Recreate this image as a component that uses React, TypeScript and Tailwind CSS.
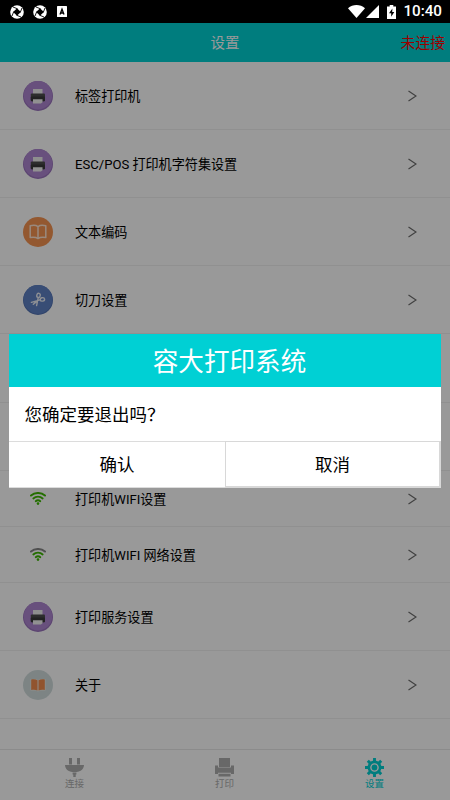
import { ReactNode } from "react";

function PrinterBadge() {
  return (
    <svg viewBox="0 0 30 30" className="h-[30px] w-[30px]">
      <circle cx="15" cy="15" r="15" fill="#9a73bd" />
      <circle cx="15" cy="14.2" r="14.2" fill="#ae86d1" />
      <rect x="10" y="8" width="9.5" height="6" fill="#ededed" />
      <rect x="7.8" y="12.4" width="14.2" height="7.8" rx="1" fill="#4b4b4b" />
      <rect x="7.8" y="15.6" width="14.2" height="4.6" rx="1" fill="#3a3a3a" />
      <path d="M10 18.2h9.5v3l-1.6 1.3H10z" fill="#f2f2f2" />
    </svg>
  );
}

function BookBadge() {
  return (
    <svg viewBox="0 0 30 30" className="h-[30px] w-[30px]">
      <circle cx="15" cy="15" r="15" fill="#f69350" />
      <path
        d="M15 9.6C13 8.1 10 8.1 7.2 8.8v11.8c2.8-.5 5.8-.4 7.8 1 2-1.4 5-1.5 7.8-1V8.8C20 8.1 17 8.1 15 9.6zM15 9.6v12"
        fill="none"
        stroke="#ffe5d2"
        strokeWidth="1.5"
        strokeLinejoin="round"
      />
    </svg>
  );
}

function ScissorsBadge() {
  return (
    <svg viewBox="0 0 30 30" className="h-[30px] w-[30px]">
      <circle cx="15" cy="15" r="15" fill="#5272b1" />
      <circle cx="15" cy="14.4" r="14.4" fill="#5e80c4" />
      <g fill="none" stroke="#e9edf6" strokeWidth="1.4" strokeLinecap="round">
        <ellipse cx="15.5" cy="10.4" rx="1.7" ry="2.1" transform="rotate(15 15.5 10.4)" />
        <ellipse cx="19.4" cy="14.4" rx="2.2" ry="1.7" transform="rotate(-10 19.4 14.4)" />
        <path d="M15.2 12.8 13.6 20.6M17 14.9 8.4 17.3M14.8 15.6l-4.5 3.6" />
      </g>
    </svg>
  );
}

function AboutBadge() {
  return (
    <svg viewBox="0 0 30 30" className="h-[30px] w-[30px]">
      <circle cx="15" cy="15" r="15" fill="#d1dddd" />
      <path
        d="M7.5 9.2h5.6l1.9 1 1.9-1h5.6v11.2h-5.6l-1.9 1.2-1.9-1.2H7.5z"
        fill="#f0ece6"
      />
      <path d="M8.2 9.5c2.2-.4 4.5-.3 6.3.8v10.3c-1.8-1-4.1-.9-6.3-.6z" fill="#f28d4d" />
      <path d="M21.8 9.5c-2.2-.4-4.5-.3-6.3.8v10.3c1.8-1 4.1-.9 6.3-.6z" fill="#f28d4d" />
    </svg>
  );
}

function Wifi({ weak }: { weak?: boolean }) {
  return (
    <svg viewBox="0 0 16 13" className="h-[13px] w-4" fill="none" strokeWidth="1.8" strokeLinecap="round">
      <path d="M1 3.5a11 11 0 0 1 14 0" stroke={weak ? "#858585" : "#3cb800"} strokeWidth="2" />
      <path d="M3.3 6.5a6.9 6.9 0 0 1 9.4 0" stroke="#3cb800" />
      <path d="M5.7 9.2a3.5 3.5 0 0 1 4.6 0" stroke="#3cb800" />
      <circle cx="8" cy="11.6" r="1.3" fill="#3cb800" />
    </svg>
  );
}

function Row({ icon, label, className }: { icon?: ReactNode; label?: string; className: string }) {
  return (
    <div className={`flex shrink-0 items-center border-b border-[#f0f0f0] ${className}`}>
      <div className="ml-[22.5px] flex w-[30px] justify-center">{icon}</div>
      <span className="ml-[22.5px] flex-1 pt-[2px] text-[13.1px] leading-5 text-black">{label}</span>
      <svg viewBox="0 0 9 12" className="mr-[33px] h-3 w-[9px]" fill="none" stroke="#6c6c6c" strokeWidth="1.2">
        <path d="M.5 1l7.5 5-7.5 5" />
      </svg>
    </div>
  );
}

function Aperture() {
  return (
    <svg viewBox="0 0 14 14" className="h-3.5 w-3.5">
      <circle cx="7" cy="7" r="6.8" fill="#fff" />
      <path d="M7 3.2 10.8 7 7 10.8 3.2 7z" fill="#000" />
      <path d="M7.5 3.8 3 2M10.2 7.5 12 3M6.5 10.2 11 12M3.8 6.5 2 11" stroke="#000" strokeWidth=".9" />
    </svg>
  );
}

function StatusBar() {
  return (
    <div className="relative z-20 flex h-[23px] shrink-0 items-center bg-black pl-[10px] pr-[8px] text-white">
      <Aperture />
      <span className="w-[8.5px]" />
      <Aperture />
      <svg viewBox="0 0 10 11" className="ml-[10.5px] h-[11px] w-2.5">
        <rect width="10" height="11" rx=".6" fill="#fff" />
        <path d="M3 8.5 5 3.2l2 5.3M3.5 7h3" fill="none" stroke="#000" strokeWidth="1.3" />
      </svg>
      <div className="ml-auto flex items-center">
        <svg viewBox="0 0 17 13" className="h-[13px] w-[17px]" fill="#fff">
          <path d="M0 3.2C4.8-1 12.2-1 17 3.2L8.5 13z" />
        </svg>
        <svg viewBox="0 0 13 13" className="ml-[1px] h-[13px] w-[13px]" fill="#fff">
          <path d="M13 0v13H0z" />
        </svg>
        <svg viewBox="0 0 9 14" className="ml-2 h-3.5 w-[9px]">
          <path d="M0 1.5h2.7V0h3.6v1.5H9V14H0z" fill="#fff" />
          <path d="M5.4 3.5 2 8.3h2.2v3.5L7.3 7H5.2z" fill="#000" />
        </svg>
        <span className="ml-[7px] text-[15.2px] font-medium leading-[23px]">10:40</span>
      </div>
    </div>
  );
}

function PlugIcon() {
  return (
    <svg viewBox="0 0 19 19" className="h-[19px] w-[19px]" fill="#adadad">
      <path d="M4 0h3v6.5H4zM12 0h3v6.5h-3zM0 7h19c-.2 4-3.4 6.7-7.5 7h-4C3.4 13.7.2 11 0 7zM7.6 14.5h3.8v2H10.7V19H8.3v-2.5h-.7z" />
    </svg>
  );
}

function PrintIcon() {
  return (
    <svg viewBox="0 0 19 19" className="h-[19px] w-[19px]" fill="#adadad">
      <path d="M4 0h11v9H4zM0 7.5h3v2h13v-2h3V16h-3v-1.2H3V16H0zM3 9.5h13v5.3H3zM3.5 15.8h12v2.7h-12z" />
    </svg>
  );
}

function GearIcon() {
  return (
    <svg viewBox="0 0 19 19" className="h-[19px] w-[19px]">
      <g stroke="#00d0d3" strokeWidth="2.9">
        <path d="M9.5 0v4M9.5 15v4M0 9.5h4M15 9.5h4M2.8 2.8l2.8 2.8M13.4 13.4l2.8 2.8M2.8 16.2l2.8-2.8M13.4 5.6l2.8-2.8" />
      </g>
      <circle cx="9.5" cy="9.5" r="5.6" fill="none" stroke="#00d0d3" strokeWidth="2.6" />
      <circle cx="9.5" cy="9.5" r="2.9" fill="#00d0d3" />
    </svg>
  );
}

function Tab({ icon, label, className }: { icon: ReactNode; label: string; className: string }) {
  return (
    <div className={`flex flex-1 flex-col items-center pr-px pt-2 ${className}`}>
      {icon}
      <span className="text-[9.5px] leading-[14px]">{label}</span>
    </div>
  );
}

function ExitDialog() {
  return (
    <div className="absolute left-[9px] top-[334px] z-20 flex h-[154px] w-[432px] flex-col bg-white text-black">
      <div className="flex h-[53px] items-center justify-center bg-[#00d0d4] pl-[9px] pt-[3px] text-[25.6px] text-white">
        容大打印系统
      </div>
      <div className="flex h-[54px] items-center pl-[15.5px] pt-[2px] text-[17.5px]">您确定要退出吗？</div>
      <div className="flex flex-1 text-[17.5px]">
        <button className="w-[216px] border-y border-[#dcdcdc] pt-px">确认</button>
        <button className="w-[216px] border border-r-2 border-b-2 border-[#d8d8d8] pt-[2px]">取消</button>
      </div>
    </div>
  );
}

export default function App() {
  return (
    <div className="relative flex h-[800px] w-[450px] flex-col overflow-hidden bg-white font-[Roboto,'Noto_Sans_CJK_SC',sans-serif]">
      <StatusBar />
      <header className="grid h-[39px] shrink-0 grid-cols-3 items-center bg-[#00d0d3] pr-[5px] pt-[2px]">
        <span />
        <span className="pl-[5px] text-center text-[14.5px] text-white">设置</span>
        <span className="text-right text-[14.8px] text-[#ff0000]">未连接</span>
      </header>

      <main className="flex flex-1 flex-col">
        <Row className="h-[68px]" icon={<PrinterBadge />} label="标签打印机" />
        <Row className="h-[68px]" icon={<PrinterBadge />} label="ESC/POS 打印机字符集设置" />
        <Row className="h-[68px]" icon={<BookBadge />} label="文本编码" />
        <Row className="h-[68px]" icon={<ScissorsBadge />} label="切刀设置" />
        <Row className="h-[69px]" />
        <Row className="h-[68px]" />
        <Row className="h-14" icon={<Wifi />} label="打印机WIFI设置" />
        <Row className="h-14" icon={<Wifi weak />} label="打印机WIFI 网络设置" />
        <Row className="h-[68px]" icon={<PrinterBadge />} label="打印服务设置" />
        <Row className="h-[68px]" icon={<AboutBadge />} label="关于" />
      </main>

      <nav className="flex h-[51px] shrink-0 border-t border-[#e8e8e8]">
        <Tab className="text-[#adadad]" icon={<PlugIcon />} label="连接" />
        <Tab className="text-[#adadad]" icon={<PrintIcon />} label="打印" />
        <Tab className="text-[#00d0d3]" icon={<GearIcon />} label="设置" />
      </nav>

      {/* Scrim covers the page but not the system bar */}
      <div className="absolute inset-0 z-10 bg-black/40" />
      <ExitDialog />
    </div>
  );
}
